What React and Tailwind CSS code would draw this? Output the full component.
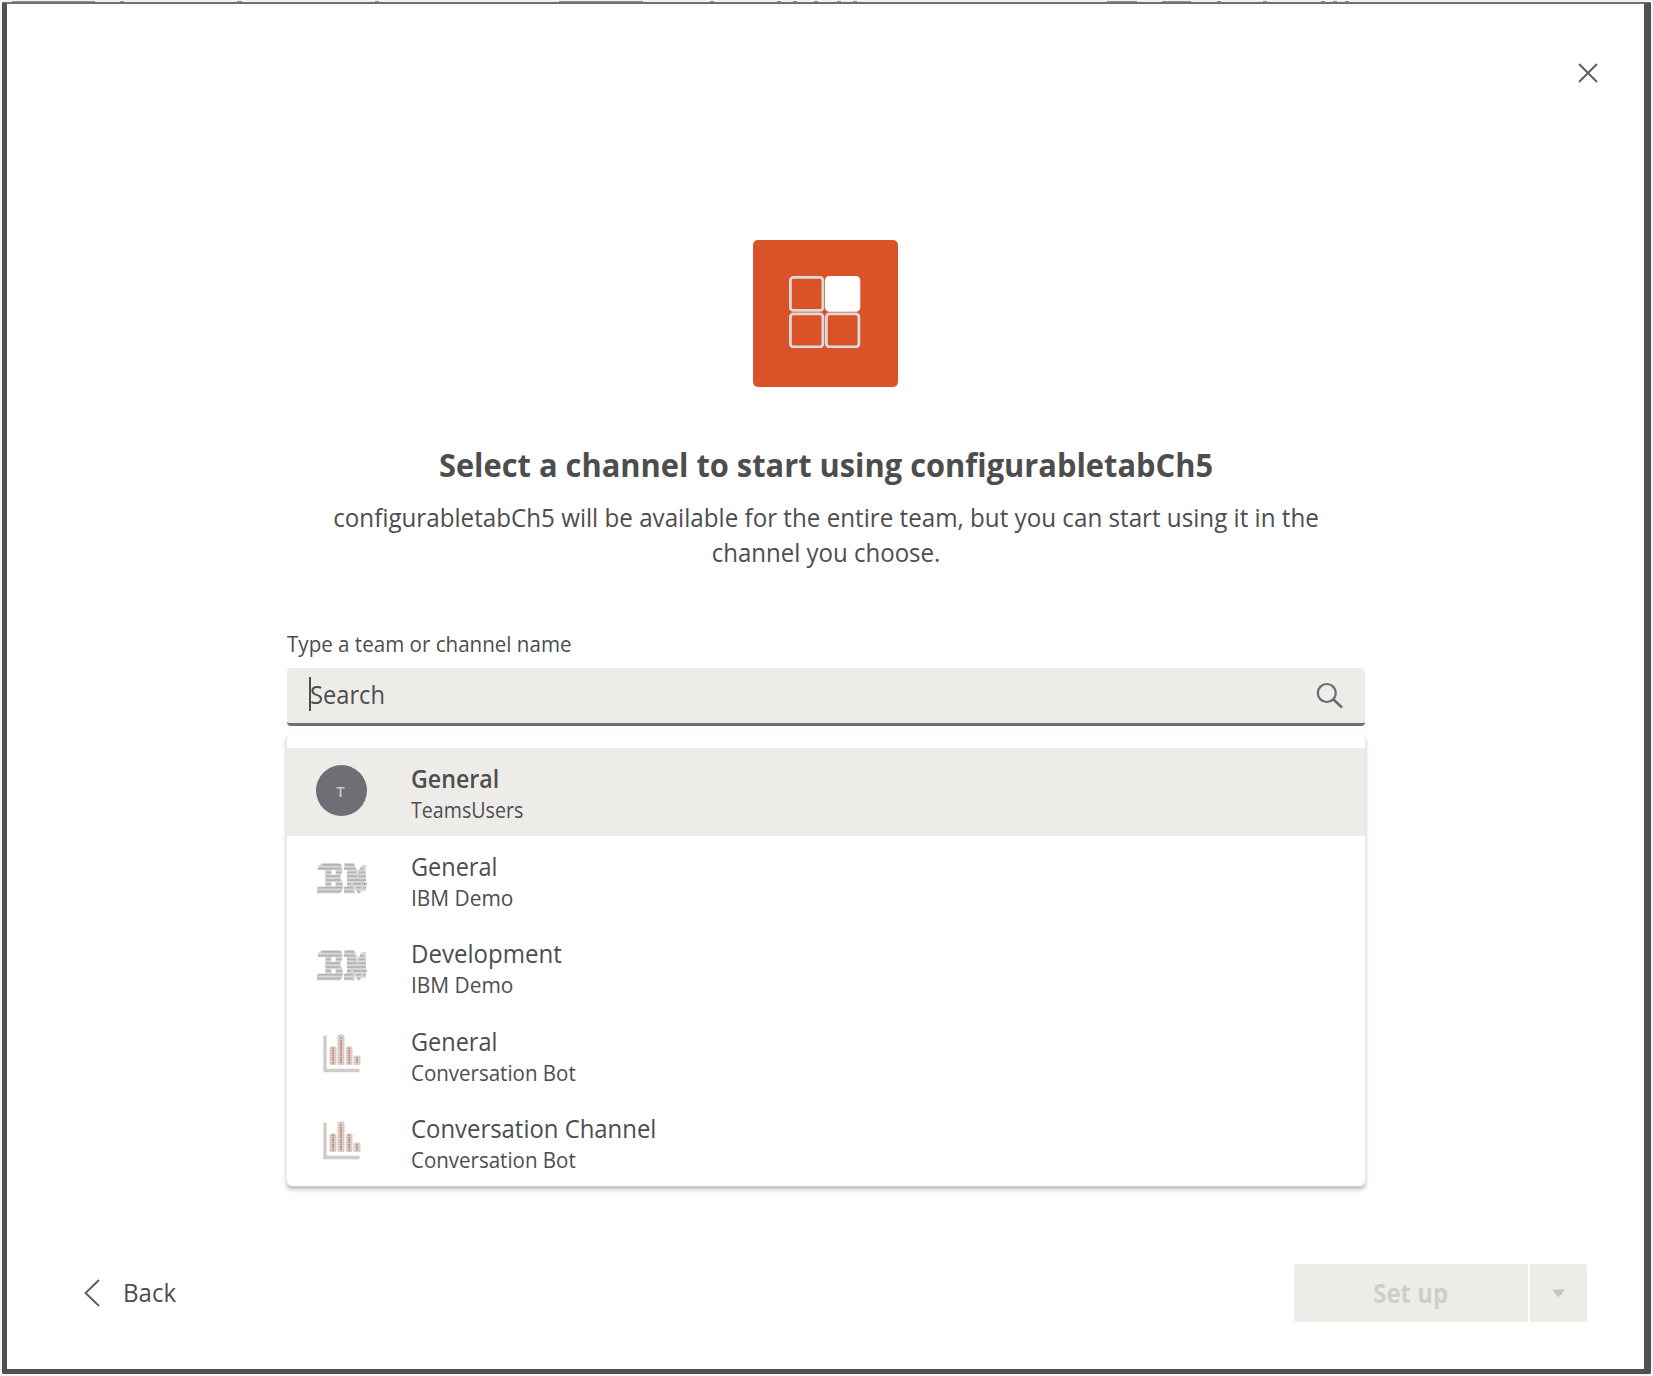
const channels = [
  { name: "General", team: "TeamsUsers", icon: "initial", active: true, nameScale: "scale-x-[0.892]", teamScale: "scale-x-[0.892]" },
  { name: "General", team: "IBM Demo", icon: "ibm", nameScale: "scale-x-[0.903]", teamScale: "scale-x-[0.95]" },
  { name: "Development", team: "IBM Demo", icon: "ibm", nameScale: "scale-x-[0.925]", teamScale: "scale-x-[0.95]" },
  { name: "General", team: "Conversation Bot", icon: "chart", nameScale: "scale-x-[0.903]", teamScale: "scale-x-[0.932]" },
  { name: "Conversation Channel", team: "Conversation Bot", icon: "chart", nameScale: "scale-x-[0.919]", teamScale: "scale-x-[0.932]" },
];

/* Edge of the page behind the dialog: [gap before, width] */
const edgeMarks = [
  [10, 83], [25, 4], [113, 5], [133, 4], [180, 84], [67, 4], [63, 4], [12, 4], [17, 4], [19, 4], [12, 4],
  [250, 30], [25, 29], [26, 4], [42, 4], [54, 4], [8, 4], [8, 4],
];

function AppLogo() {
  return (
    <div className="h-[147px] w-[145px] rounded-[5px] bg-[#d95228] pt-[36px] pl-[36px]">
      <svg width="72" height="72" viewBox="0 0 72 72" fill="none" stroke="#dcdad8" strokeWidth="2.8">
        <rect x="1.4" y="1.4" width="32.500" height="33" rx="3" />
        <rect x="37.4" y="1.4" width="32.500" height="33" rx="3" fill="#fff" stroke="#fff" />
        <rect x="1.4" y="37.8" width="32.500" height="33" rx="3" />
        <rect x="37.4" y="37.8" width="32.500" height="33" rx="3" />
      </svg>
    </div>
  );
}

/* Striped letter marks: [row, x, width] */
const ibmStripes = [
  [0, 6, 19], [0, 29, 9],
  [1, 2, 23], [1, 28, 11], [1, 44, 4],
  [2, 10, 5], [2, 20, 6], [2, 31, 9], [2, 43, 6],
  [3, 10, 14], [3, 31, 10], [3, 42, 8],
  [4, 10, 14], [4, 31, 19],
  [5, 10, 5], [5, 20, 6], [5, 31, 4], [5, 37, 8], [5, 46, 5],
  [6, 2, 24], [6, 28, 9], [6, 40, 5], [6, 47, 3],
  [7, 1, 24], [7, 28, 9], [7, 41, 3],
];

function IbmLogo() {
  return (
    <svg width="51" height="51" viewBox="0 0 51 51">
      <path
        fill="#d9d7d4"
        fillRule="evenodd"
        d="M6 10H23Q27 11 26.500 17L24.500 24.500L27 31Q28 39 23 40.500H1V34H9V17H2V13ZM15.500 17V21.500H19.500V17ZM15.500 29V33.500H19.500V29ZM28 10H38L42 18L46 12H50V38H46L43 41L39 36V40.500H28V34H31V17H28Z"
      />
      {ibmStripes.map(([row, x, w], i) => (
        <rect key={i} x={x} y={11 + row * 3.8} width={w} height="1.7" fill="#b3b0b6" />
      ))}
    </svg>
  );
}

function ChartLogo() {
  return (
    <svg width="51" height="51" viewBox="0 0 51 51" fill="none">
      <path d="M9 7.500V42.500H43.500" stroke="#cfccc8" strokeWidth="3.400" />
      <g fill="#d2cfcb">
        <rect x="13.500" y="18.500" width="7" height="18.500" rx="1.5" />
        <rect x="21.500" y="6.500" width="7" height="30.500" rx="1.5" />
        <rect x="30" y="18.500" width="6.500" height="18.500" rx="1.5" />
        <rect x="37.500" y="27.500" width="7" height="9.500" rx="1.5" />
      </g>
      <g stroke="#dc6a43" strokeWidth="1.400" strokeDasharray="1.6 0.8">
        <path d="M17 19.500V36" />
        <path d="M25 9.500V36" />
        <path d="M33.200 19.500V36" />
        <path d="M41 29V35" />
      </g>
    </svg>
  );
}

function ChannelIcon({ kind }) {
  if (kind === "ibm") return <IbmLogo />;
  if (kind === "chart") return <ChartLogo />;
  return (
    <div className="flex h-[51px] w-[51px] items-center justify-center rounded-full bg-[#6e6e75] pt-[1px] pr-[2px] text-[15px] leading-none font-semibold text-[#c9c7c6]">
      T
    </div>
  );
}

function ChannelRow({ channel }) {
  return (
    <li className={`flex h-[87.5px] items-start pl-[29px] ${channel.active ? "bg-[#eeece9]" : ""}`}>
      <div className="mt-[17.200px] w-[51px]">
        <ChannelIcon kind={channel.icon} />
      </div>
      <div className="ml-[43.700px] pt-[14.200px] whitespace-nowrap">
        <div className={`origin-left text-[26px] leading-[32px] ${channel.nameScale} ${channel.active ? "font-semibold" : ""}`}>{channel.name}</div>
        <div className={`origin-left text-[22px] leading-[31px] ${channel.teamScale}`}>{channel.team}</div>
      </div>
    </li>
  );
}

export default function App() {
  return (
    <div className="h-[1376px] w-[1653px] overflow-hidden bg-[#f3f3f0] pl-[2px] font-['Open_Sans',sans-serif] text-[#4d4d50]">
      <div className="flex h-[2px] items-end">
        {edgeMarks.map(([gap, width], i) => (
          <span key={i} className="h-[1px] shrink-0 bg-[#8f8f92]" style={{ marginLeft: gap, width }} />
        ))}
      </div>
      <div className="flex h-[1372px] w-[1649px] flex-col rounded-[2px] border-t-2 border-r-[7px] border-b-[5px] border-l-[5px] border-[#505052] border-t-[#707077] bg-white">
        <div className="flex h-[235.500px] justify-end pt-[59px] pr-[46px]">
          <button className="h-[20px] w-[20px]" aria-label="Close">
            <svg width="20" height="20" viewBox="0 0 20 20" stroke="#5c5c62" strokeWidth="1.9">
              <path d="M1 1L19 19M19 1L1 19" />
            </svg>
          </button>
        </div>
        <div className="ml-[280px] flex w-[1078px] flex-col">
          <div className="pl-[466px]">
            <AppLogo />
          </div>
          <h1 className="mt-[56.500px] scale-x-[0.963] text-center text-[32px] leading-[44px] font-bold whitespace-nowrap">
            Select a channel to start using configurabletabCh5
          </h1>
          <p className="mt-[13px] text-center text-[26px] leading-[35px]">
            <span className="block scale-x-[0.93] whitespace-nowrap">configurabletabCh5 will be available for the entire team, but you can start using it in the</span>
            <span className="block scale-x-[0.924] whitespace-nowrap">channel you choose.</span>
          </p>
          <label className="mt-[59px] block origin-left scale-x-[0.914] text-[22.500px] leading-[30px] whitespace-nowrap">
            Type a team or channel name
          </label>
          <div className="mt-[9px] flex h-[57.500px] items-center rounded-[4px] border-b-[3px] border-[#6e6e76] bg-[#eeece9] pr-[22px] pl-[22px]">
            <span className="mb-[2px] h-[34px] w-[2px] bg-[#4d4d50]" />
            <span className="mb-[2px] -ml-[1.500px] flex-1 origin-left scale-x-[0.91] text-[26px] leading-[34px]">Search</span>
            <svg className="mt-[1px]" width="27" height="27" viewBox="0 0 27 27" fill="none" stroke="#6a6a72" strokeWidth="2.2">
              <circle cx="10.800" cy="11" r="9" />
              <path d="M17.500 17.500L26 25.500" strokeWidth="2.600" />
            </svg>
          </div>
          <ul className="mt-[9.500px] h-[451px] rounded-[5px] bg-white pt-[13px] shadow-[0_2.5px_1px_#cbc9c7,0_3px_2px_3px_#eeece9]">
            {channels.map((channel, i) => (
              <ChannelRow key={i} channel={channel} />
            ))}
          </ul>
        </div>
        <div className="mt-[78px] flex h-[58px] items-center pr-[57.500px] pl-[77px]">
          <button className="flex items-center">
            <svg width="16" height="28" viewBox="0 0 16 28" fill="none" stroke="#5c5c62" strokeWidth="1.9">
              <path d="M15 1L1.500 14L15 27" />
            </svg>
            <span className="mb-[2px] ml-[22.500px] origin-left scale-x-[0.925] text-[26px] leading-[34px]">Back</span>
          </button>
          <div className="ml-auto flex h-[58px] gap-[2px]">
            <button className="flex w-[234px] items-center justify-center rounded-l-[3px] bg-[#eeece9] pb-[1px] text-[26px] leading-[34px] font-bold text-[#cfcdca]">
              <span className="scale-x-[0.92]">Set up</span>
            </button>
            <button className="flex w-[57px] items-center justify-center rounded-r-[3px] bg-[#eeece9] pt-[1px]" aria-label="More options">
              <svg width="13" height="9" viewBox="0 0 13 9" fill="#c6c3c0">
                <path d="M0 0.500H13L6.500 8.500Z" />
              </svg>
            </button>
          </div>
        </div>
      </div>
    </div>
  );
}
